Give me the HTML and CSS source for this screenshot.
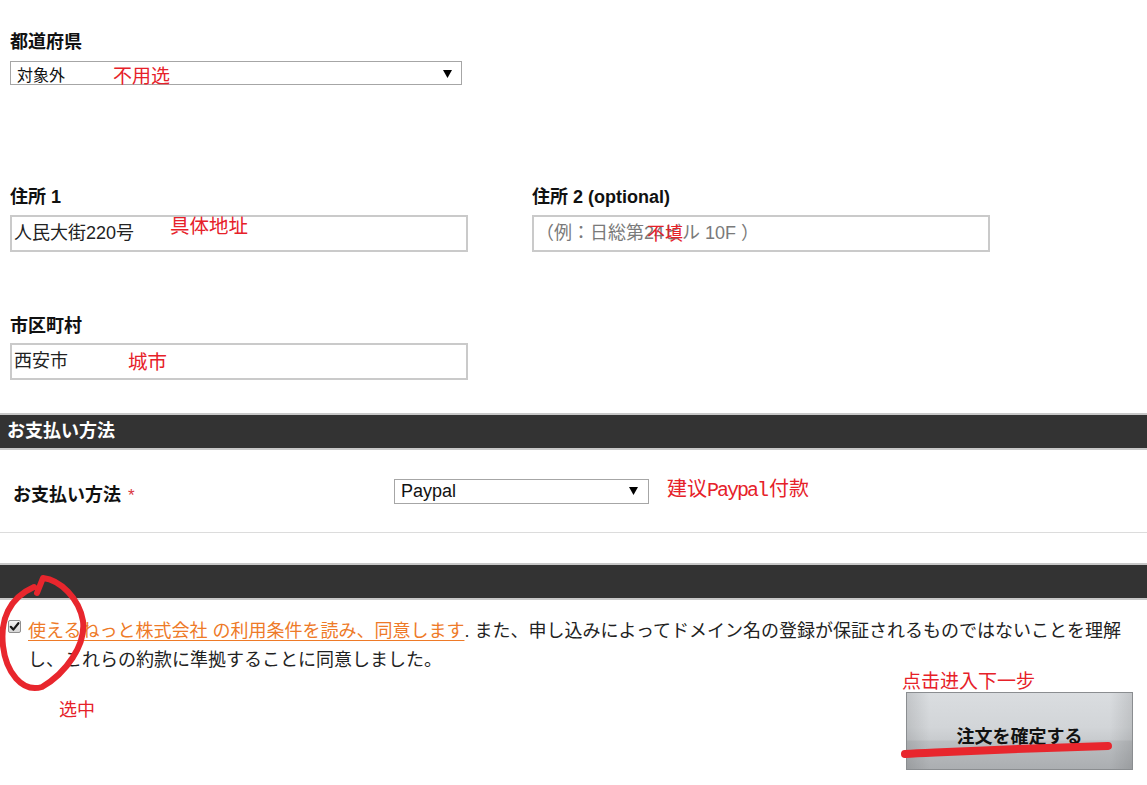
FILE: index.html
```html
<!DOCTYPE html>
<html lang="ja">
<head>
<meta charset="utf-8">
<title>注文</title>
<link rel="stylesheet" href="styles.css">
</head>
<body>
<main class="page">
  <div class="fields">
    <div class="field">
      <span class="label">都道府県</span>
      <div class="select select-pref"><span>対象外</span><svg class="arrow" width="9" height="8" viewBox="0 0 9 8"><polygon points="0,0 9,0 4.5,8" fill="#000"/></svg></div>
    </div>

    <div class="addr-row">
      <div class="field">
        <span class="label">住所 1</span>
        <div class="input">人民大街220号</div>
      </div>
      <div class="field">
        <span class="label">住所 2 (optional)</span>
        <div class="input placeholder">（例：日総第24ビル 10F ）</div>
      </div>
    </div>

    <div class="field city">
      <span class="label">市区町村</span>
      <div class="input">西安市</div>
    </div>
  </div>

  <div class="bar bar-pay">お支払い方法</div>

  <div class="pay-row">
    <div class="pay-label">お支払い方法 <span class="req">*</span></div>
    <div class="select select-pay"><span>Paypal</span><svg class="arrow" width="9" height="8" viewBox="0 0 9 8"><polygon points="0,0 9,0 4.5,8" fill="#000"/></svg></div>
  </div>

  <div class="bar bar-terms"></div>

  <div class="agree">
    <span class="cb"><svg width="11" height="11" viewBox="0 0 11 11"><polyline points="1.8,5.8 4.3,8.6 9.4,2.2" fill="none" stroke="#1a1a1a" stroke-width="2.2" stroke-linecap="round" stroke-linejoin="round"/></svg></span>
    <p class="agree-text"><a class="terms-link" href="#">使えるねっと株式会社 の利用条件を読み、同意します</a>. また、申し込みによってドメイン名の登録が保証されるものではないことを理解し、これらの約款に準拠することに同意しました。</p>
  </div>

  <div class="actions">
    <button class="confirm" type="button">注文を確定する</button>
  </div>
</main>

<div class="annotations">
  <span class="note note-pref">不用选</span>
  <span class="note note-addr1">具体地址</span>
  <span class="note note-addr2">不填</span>
  <span class="note note-city">城市</span>
  <span class="note note-pay">建议<span class="mono">Paypal</span>付款</span>
  <span class="note note-check">选中</span>
  <span class="note note-next">点击进入下一步</span>
  <svg class="strokes" width="1147" height="785" viewBox="0 0 1147 785">
    <path d="M37 593 L43 578 C60 580 79 598 83 621 C86 645 66 673 42 687 C22 693 6 672 3 646 C0 620 9 598 34 587" fill="none" stroke="#e8262d" stroke-width="6" stroke-linecap="round" stroke-linejoin="round"/>
    <path d="M905 754 C950 752 1000 749 1108 746" fill="none" stroke="#e8262d" stroke-width="8" stroke-linecap="round"/>
  </svg>
</div>
</body>
</html>
```

FILE: styles.css
```css
* { box-sizing: border-box; }

html, body {
  margin: 0;
  padding: 0;
  background: #fff;
}

body {
  font-family: "Liberation Sans", "Noto Sans CJK JP", sans-serif;
  color: #222;
  width: 1147px;
  height: 785px;
  overflow: hidden;
  position: relative;
}

.fields {
  padding: 30px 10px 0;
}

.field {
  display: flex;
  flex-direction: column;
  align-items: flex-start;
}

.label {
  display: block;
  font-size: 18px;
  font-weight: bold;
  line-height: 24px;
  color: #111;
}

.select {
  display: flex;
  align-items: center;
  justify-content: space-between;
  height: 24px;
  border: 1px solid #a6a6a6;
  background: #fff;
  color: #111;
}

.select-pref {
  width: 452px;
  margin-top: 7px;
  font-size: 16px;
  padding: 2px 9px 0 6px;
}

.select-pay {
  width: 255px;
  height: 25px;
  font-size: 18px;
  padding: 0 10px 0 6px;
}

.addr-row {
  display: grid;
  grid-template-columns: 458px 458px;
  column-gap: 64px;
  margin-top: 100px;
}

.input {
  width: 458px;
  height: 37px;
  margin-top: 6px;
  border: 2px solid #cacaca;
  padding: 0 2px;
  font-size: 18px;
  line-height: 33px;
  color: #222;
  background: #fff;
}

.placeholder {
  color: #7a7a7a;
}

.city {
  margin-top: 62px;
}

.city .input {
  margin-top: 5px;
}

.bar {
  height: 37px;
  background: #333;
  border-top: 2px solid #c8c8c8;
  border-bottom: 2px solid #c8c8c8;
  color: #fff;
  font-size: 18px;
  font-weight: bold;
  line-height: 32px;
  padding-left: 7px;
}

.bar-pay {
  margin-top: 33px;
}

.pay-row {
  display: grid;
  grid-template-columns: 381px 255px;
  align-items: center;
  height: 83px;
  padding-left: 13px;
  border-bottom: 1px solid #dcdcdc;
}

.pay-label {
  font-size: 18px;
  font-weight: bold;
  color: #111;
  margin-top: 4px;
}

.req {
  color: #d9353f;
  font-size: 17px;
  font-weight: normal;
  margin-left: 2px;
}

.bar-terms {
  margin-top: 30px;
}

.agree {
  display: flex;
  align-items: flex-start;
  padding: 17px 17px 0 8px;
}

.cb {
  flex: none;
  width: 13px;
  height: 13px;
  margin-top: 2.5px;
  margin-right: 7px;
  border: 1px solid #8e8e8e;
  border-radius: 2px;
  background: linear-gradient(#f6f6f6, #d6d6d6);
  display: flex;
  align-items: center;
  justify-content: center;
}

.agree-text {
  margin: 0;
  font-size: 18px;
  line-height: 29px;
  color: #222;
}

.terms-link {
  color: #ee7a28;
  text-decoration: underline;
  text-underline-offset: 3px;
}

.actions {
  display: flex;
  justify-content: flex-end;
  padding-right: 14px;
  margin-top: 17px;
}

.confirm {
  width: 227px;
  height: 78px;
  padding: 8px 0 0;
  border: 1px solid #8a8d90;
  background:
    linear-gradient(90deg, rgba(0,0,0,0.10), rgba(0,0,0,0) 10%, rgba(0,0,0,0) 90%, rgba(0,0,0,0.10)),
    linear-gradient(#dadde0, #d2d5d8 45%, #c8cbce 62%, #bcbfc2 63%, #abaeb1);
  font-family: "Liberation Sans", "Noto Sans CJK JP", sans-serif;
  font-size: 18px;
  font-weight: bold;
  color: #111;
}

/* hand-drawn annotation layer on top of the form */
.annotations {
  position: absolute;
  left: 0;
  top: 0;
  width: 1147px;
  height: 785px;
  pointer-events: none;
}

.strokes {
  position: absolute;
  left: 0;
  top: 0;
}

.note {
  position: absolute;
  font-family: "Noto Sans CJK SC", sans-serif;
  color: #e62129;
  line-height: 1;
  white-space: nowrap;
}

.note-pref { left: 113px; top: 65px; font-size: 19px; }
.note-addr1 { left: 170px; top: 215px; font-size: 19.5px; }
.note-addr2 { left: 647px; top: 223px; font-size: 18px; }
.note-city { left: 128px; top: 351px; font-size: 19.5px; }
.note-pay { left: 667px; top: 478px; font-size: 20px; }
.note-pay .mono { font-family: "Liberation Mono", monospace; letter-spacing: -2px; margin-right: 2px; }
.note-check { left: 59px; top: 699px; font-size: 18px; }
.note-next { left: 902px; top: 670px; font-size: 19px; }
```
